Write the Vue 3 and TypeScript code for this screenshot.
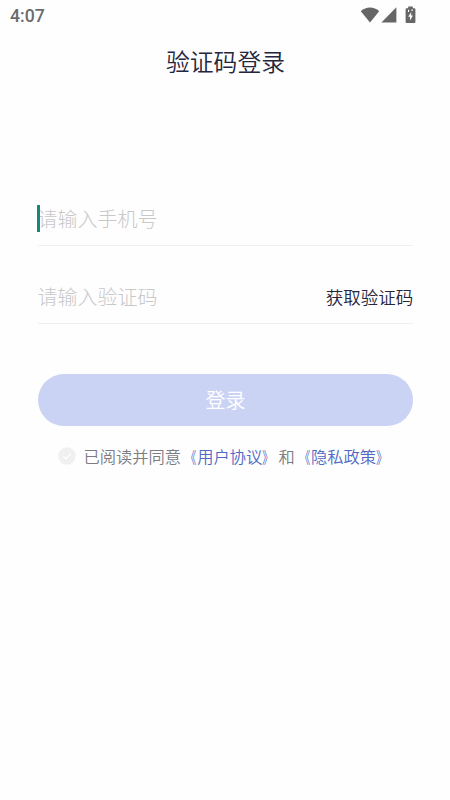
<script setup lang="ts">
import { ref } from 'vue'

const phone = ref('')
const code = ref('')
const agreed = ref(false)
</script>

<template>
  <main class="screen">
    <header class="status">
      <span class="time">4:07</span>
      <div class="indicators">
        <svg class="wifi" width="20" height="16" viewBox="0 0 20 16">
          <path d="M0.8 4.3C6-0.7 14-0.7 19.2 4.3L10 15.6Z" />
        </svg>
        <svg class="signal" width="16" height="16" viewBox="0 0 16 16">
          <path d="M15.4 0.3V15.5H0.4Z" />
        </svg>
        <svg class="battery" width="11" height="18" viewBox="0 0 11 18">
          <path
            fill-rule="evenodd"
            d="M3.2 0.6H7.8V2.2H9.3Q10.4 2.2 10.4 3.3V16Q10.4 17.1 9.3 17.1H1.7Q.6 17.1 .6 16V3.3Q.6 2.2 1.7 2.2H3.2ZM6.2 6L3.2 10.8H5V14.6L8 9.4H6.2ZM3 3.7V6H4.1V3.7ZM6.3 3.5V4.8H8V3.5Z"
          />
        </svg>
      </div>
    </header>

    <h1 class="title">验证码登录</h1>

    <form class="form" @submit.prevent>
      <div class="field">
        <span class="caret"></span>
        <input v-model="phone" type="tel" placeholder="请输入手机号" />
      </div>
      <div class="field">
        <input v-model="code" type="text" placeholder="请输入验证码" />
        <button class="send" type="button">获取验证码</button>
      </div>
      <button class="submit" type="submit">登录</button>
      <div class="agreement">
        <button class="check" type="button" role="checkbox" :aria-checked="agreed" @click="agreed = !agreed">
          <svg width="18" height="18" viewBox="0 0 18 18">
            <circle cx="9" cy="9" r="8.7" />
            <path d="M5.2 9.1L8 11.7L12.9 6.7" />
          </svg>
        </button>
        <p>已阅读并同意<a><span class="open">《</span>用户协议<span class="close">》</span></a>和<a><span class="open">《</span>隐私政策<span class="close">》</span></a></p>
      </div>
    </form>
  </main>
</template>

<style>
body {
  background: #fefefe;
}
</style>

<style scoped>
.screen {
  box-sizing: border-box;
  height: 800px;
  overflow: hidden;
  background: #fefefe;
  font-family: "Noto Sans CJK SC", sans-serif;
}

.status {
  display: flex;
  justify-content: space-between;
  align-items: center;
  height: 32px;
  padding: 0 34px 0 10px;
}

.time {
  color: #6b6b6b;
  font: 500 17.6px/32px Roboto, sans-serif;
}

.indicators {
  display: flex;
  align-items: center;
  height: 30px;
  margin-bottom: 2px;
  fill: #666;
}

.signal {
  margin-left: 1px;
}

.battery {
  margin-left: 8px;
}

.title {
  margin: 11px 0 0;
  padding-left: 1px;
  color: #25263d;
  font-size: 23.8px;
  font-weight: 350;
  line-height: 36px;
  text-align: center;
}

.form {
  margin: 113px 36.7px 0 37.5px;
}

.field {
  position: relative;
  display: flex;
  align-items: center;
  box-sizing: border-box;
  height: 54px;
  padding-top: 1px;
  border-bottom: 1px solid #efeff0;
}

.field + .field {
  margin-top: 24px;
}

.caret {
  position: absolute;
  left: -0.5px;
  top: 12.5px;
  width: 3px;
  height: 27.5px;
  background: #188777;
}

input {
  flex: 1;
  min-width: 0;
  padding: 0;
  border: 0;
  outline: 0;
  background: none;
  color: #25263d;
  font: 300 20px/30px "Noto Sans CJK SC", sans-serif;
}

input::placeholder {
  color: #c8c8cb;
  opacity: 1;
}

button {
  padding: 0;
  border: 0;
  background: none;
  font-family: inherit;
}

.send {
  color: #25263d;
  font-size: 17.5px;
  font-weight: 350;
  line-height: 28px;
}

.submit {
  display: block;
  width: 100%;
  height: 52px;
  margin-top: 50px;
  border-radius: 26px;
  background: #cad3f4;
  color: #fff;
  font-size: 20px;
  font-weight: 350;
  line-height: 52px;
}

.agreement {
  display: flex;
  align-items: center;
  margin-top: 18px;
  padding-left: 20.5px;
}

.check {
  display: flex;
}

.check circle {
  fill: #f0f0f1;
}

.check path {
  fill: none;
  stroke: #fff;
  stroke-width: 1.2;
}

p {
  margin: 0 0 0 7.5px;
  color: #7b7c84;
  font-size: 16.25px;
  font-weight: 350;
  line-height: 24px;
  white-space: nowrap;
}

a {
  color: #5069c4;
}

.open,
.close {
  display: inline-block;
}

.open {
  transform: translateX(-1px) scaleX(0.68);
  transform-origin: right;
}

.close {
  transform: scaleX(0.72);
  transform-origin: left;
}
</style>
